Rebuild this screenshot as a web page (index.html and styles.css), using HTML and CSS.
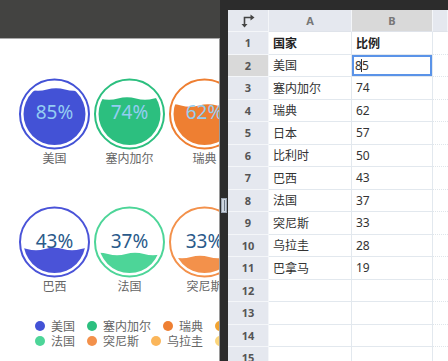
FILE: index.html
```html
<!DOCTYPE html>
<html>
<head>
<meta charset="utf-8">
<link rel="stylesheet" href="styles.css">
</head>
<body>
<div class="app">
  <div class="left">
    <div class="topbar"></div>
    <div class="canvas">
      <div class="charts row1">
        <div class="chart">
          <svg width="75" height="74" viewBox="0 0 75 74">
            <defs>
              <clipPath id="c1"><circle cx="37.5" cy="37" r="31"/></clipPath>
            </defs>
            <circle cx="37.5" cy="37" r="34.5" fill="none" stroke="#4352d6" stroke-width="2"/>
            <g clip-path="url(#c1)"><path fill="#4352d6" d="M-6,12.5 Q3,10 12,12.5 T30,12.5 T48,12.5 T66,12.5 T84,12.5 V80 H-6Z"/></g>
            <text x="37.5" y="42" class="pct in">85%</text>
          </svg>
          <div class="name">美国</div>
        </div>
        <div class="chart">
          <svg width="75" height="74" viewBox="0 0 75 74">
            <defs>
              <clipPath id="c2"><circle cx="37.5" cy="37" r="31"/></clipPath>
            </defs>
            <circle cx="37.5" cy="37" r="34.5" fill="none" stroke="#2cbf7f" stroke-width="2"/>
            <g clip-path="url(#c2)"><path fill="#2cbf7f" d="M-10,21.5 Q-1,19 8,21.5 T26,21.5 T44,21.5 T62,21.5 T80,21.5 V80 H-10Z"/></g>
            <text x="37.5" y="42" class="pct in">74%</text>
          </svg>
          <div class="name">塞内加尔</div>
        </div>
        <div class="chart">
          <svg width="75" height="74" viewBox="0 0 75 74">
            <defs>
              <clipPath id="c3"><circle cx="37.5" cy="37" r="31"/></clipPath>
            </defs>
            <circle cx="37.5" cy="37" r="34.5" fill="none" stroke="#ee7f32" stroke-width="2"/>
            <g clip-path="url(#c3)"><path fill="#ee7f32" d="M-4,28.5 Q5,26 14,28.5 T32,28.5 T50,28.5 T68,28.5 T86,28.5 V80 H-4Z"/></g>
            <text x="37.5" y="42" class="pct in">62%</text>
          </svg>
          <div class="name">瑞典</div>
        </div>
      </div>
      <div class="charts row2">
        <div class="chart">
          <svg width="75" height="74" viewBox="0 0 75 74">
            <defs>
              <clipPath id="c4"><circle cx="37.5" cy="37" r="31"/></clipPath>
              <clipPath id="w4"><path d="M-8,44 Q1,41.5 10,44 T28,44 T46,44 T64,44 T82,44 V80 H-8Z"/></clipPath>
            </defs>
            <circle cx="37.5" cy="37" r="34.5" fill="none" stroke="#4a53d8" stroke-width="2"/>
            <text x="37.5" y="43" class="pct out">43%</text>
            <g clip-path="url(#c4)"><path fill="#4a53d8" d="M-8,44 Q1,41.5 10,44 T28,44 T46,44 T64,44 T82,44 V80 H-8Z"/></g>
            <g clip-path="url(#w4)"><path fill="#3b48c4" d="M0,0 H0 V0Z"/></g>
          </svg>
          <div class="name">巴西</div>
        </div>
        <div class="chart">
          <svg width="75" height="74" viewBox="0 0 75 74">
            <defs>
              <clipPath id="c5"><circle cx="37.5" cy="37" r="31"/></clipPath>
            </defs>
            <circle cx="37.5" cy="37" r="34.5" fill="none" stroke="#4dd598" stroke-width="2"/>
            <text x="37.5" y="43" class="pct out">37%</text>
            <g clip-path="url(#c5)"><path fill="#4dd598" d="M-2,49 Q7,46.5 16,49 T34,49 T52,49 T70,49 T88,49 V80 H-2Z"/></g>
          </svg>
          <div class="name">法国</div>
        </div>
        <div class="chart">
          <svg width="75" height="74" viewBox="0 0 75 74">
            <defs>
              <clipPath id="c6"><circle cx="37.5" cy="37" r="31"/></clipPath>
            </defs>
            <circle cx="37.5" cy="37" r="34.5" fill="none" stroke="#f3914b" stroke-width="2"/>
            <text x="37.5" y="43" class="pct out">33%</text>
            <g clip-path="url(#c6)"><path fill="#f3914b" d="M-12,52 Q-3,49.5 6,52 T24,52 T42,52 T60,52 T78,52 V80 H-12Z"/></g>
          </svg>
          <div class="name">突尼斯</div>
        </div>
      </div>
      <div class="legend">
        <div class="lrow">
          <span class="item"><i class="dot" style="background:#4352d6"></i>美国</span>
          <span class="item"><i class="dot" style="background:#2cbf7f"></i>塞内加尔</span>
          <span class="item"><i class="dot" style="background:#ee7f32"></i>瑞典</span>
          <span class="item"><i class="dot" style="background:#f2a432"></i></span>
        </div>
        <div class="lrow">
          <span class="item"><i class="dot" style="background:#4dd598"></i>法国</span>
          <span class="item"><i class="dot" style="background:#f3914b"></i>突尼斯</span>
          <span class="item"><i class="dot" style="background:#fbb65a"></i>乌拉圭</span>
          <span class="item"><i class="dot" style="background:#fcd67c"></i></span>
        </div>
      </div>
    </div>
  </div>
  <div class="splitter"><div class="grip"></div></div>
  <div class="right">
    <div class="sheet">
      <div class="row head">
        <div class="cell corner">
          <svg width="14" height="14" viewBox="0 0 14 14">
            <path d="M3.5 11 V3.5 H10" fill="none" stroke="#444" stroke-width="1.6"/>
            <path d="M0.5 10 H6.5 L3.5 13.5Z" fill="#444"/>
            <path d="M9.5 0.5 V6.5 L13.5 3.5Z" fill="#444"/>
          </svg>
        </div>
        <div class="cell ch">A</div>
        <div class="cell ch sel">B</div>
        <div class="cell ch"></div>
      </div>
      <div class="row"><div class="cell rh">1</div><div class="cell b">国家</div><div class="cell b">比例</div><div class="cell c"></div></div>
      <div class="row"><div class="cell rh sel">2</div><div class="cell">美国</div><div class="cell active">8<span class="caret"></span>5</div><div class="cell c"></div></div>
      <div class="row"><div class="cell rh">3</div><div class="cell">塞内加尔</div><div class="cell">74</div><div class="cell c"></div></div>
      <div class="row"><div class="cell rh">4</div><div class="cell">瑞典</div><div class="cell">62</div><div class="cell c"></div></div>
      <div class="row"><div class="cell rh">5</div><div class="cell">日本</div><div class="cell">57</div><div class="cell c"></div></div>
      <div class="row"><div class="cell rh">6</div><div class="cell">比利时</div><div class="cell">50</div><div class="cell c"></div></div>
      <div class="row"><div class="cell rh">7</div><div class="cell">巴西</div><div class="cell">43</div><div class="cell c"></div></div>
      <div class="row"><div class="cell rh">8</div><div class="cell">法国</div><div class="cell">37</div><div class="cell c"></div></div>
      <div class="row"><div class="cell rh">9</div><div class="cell">突尼斯</div><div class="cell">33</div><div class="cell c"></div></div>
      <div class="row"><div class="cell rh">10</div><div class="cell">乌拉圭</div><div class="cell">28</div><div class="cell c"></div></div>
      <div class="row"><div class="cell rh">11</div><div class="cell">巴拿马</div><div class="cell">19</div><div class="cell c"></div></div>
      <div class="row"><div class="cell rh">12</div><div class="cell"></div><div class="cell"></div><div class="cell c"></div></div>
      <div class="row"><div class="cell rh">13</div><div class="cell"></div><div class="cell"></div><div class="cell c"></div></div>
      <div class="row"><div class="cell rh">14</div><div class="cell"></div><div class="cell"></div><div class="cell c"></div></div>
      <div class="row"><div class="cell rh">15</div><div class="cell"></div><div class="cell"></div><div class="cell c"></div></div>
    </div>
  </div>
</div>
</body>
</html>
```
FILE: styles.css
```css
* { box-sizing: border-box; }
html, body {
  margin: 0;
  padding: 0;
  width: 448px;
  height: 361px;
  overflow: hidden;
  background: #2c2c2c;
  font-family: "Noto Sans", "Noto Sans CJK SC", sans-serif;
}
.app {
  display: flex;
  width: 448px;
  height: 361px;
}
.left {
  width: 220px;
  flex: 0 0 220px;
  display: flex;
  flex-direction: column;
  overflow: hidden;
}
.topbar {
  height: 38px;
  flex: 0 0 38px;
  background: #434341;
}
.canvas {
  flex: 1;
  background: #fff;
  border-top: 1px solid #a9a9a9;
  border-right: 1px solid #9a9a9a;
  overflow: hidden;
}
.charts {
  display: flex;
  padding-left: 17px;
  width: 219px;
  overflow: hidden;
}
.row1 { margin-top: 38px; }
.row2 { margin-top: 40px; }
.chart {
  flex: 0 0 75px;
  width: 75px;
  display: flex;
  flex-direction: column;
  align-items: center;
}
.chart svg { display: block; }
.name {
  height: 14px;
  line-height: 14px;
  font-size: 12px;
  color: #666;
  font-family: "Noto Sans CJK SC", sans-serif;
  white-space: nowrap;
}
.pct {
  font-family: "Noto Sans", "Noto Sans CJK SC", sans-serif;
  font-size: 19px;
  text-anchor: middle;
}
.pct.in { fill: #94cdf2; }
.pct.out { fill: #2a5a8a; }
.legend {
  margin-top: 25px;
  padding-left: 35px;
  width: 219px;
  overflow: hidden;
  font-family: "Noto Sans CJK SC", sans-serif;
  font-size: 12px;
  color: #666;
}
.lrow {
  display: flex;
  gap: 12px;
  height: 15px;
  line-height: 15px;
  white-space: nowrap;
}
.item {
  display: flex;
  align-items: center;
}
.dot {
  width: 10px;
  height: 10px;
  border-radius: 50%;
  margin-right: 6px;
  flex: 0 0 10px;
}
.splitter {
  flex: 0 0 8px;
  width: 8px;
  background: #2c2c2c;
  display: flex;
  align-items: flex-start;
  justify-content: center;
}
.grip {
  margin-top: 198px;
  width: 6px;
  height: 15px;
  background: #cdd5df;
  border: 1px solid #9aa4b2;
  position: relative;
}
.grip::after {
  content: "";
  position: absolute;
  left: 1.5px;
  top: 1px;
  width: 1px;
  height: 11px;
  background: #6f7a88;
}
.right {
  flex: 1;
  padding-top: 10px;
  background: #2c2c2c;
  overflow: hidden;
}
.sheet {
  background: #fff;
  height: 100%;
  overflow: hidden;
  font-family: "Noto Sans", "Noto Sans CJK SC", sans-serif;
  font-size: 12px;
  color: #333;
}
.row {
  display: grid;
  grid-template-columns: 41px 83px 81px 1fr;
  height: 22.5px;
}
.row.head { height: 22px; }
.cell {
  border-right: 1px solid #e2e8ee;
  border-bottom: 1px solid #e2e8ee;
  padding-left: 4px;
  display: flex;
  align-items: center;
  white-space: nowrap;
  overflow: hidden;
}
.cell.c { border-right: none; border-bottom: 1px dotted #dfe5ea; }
.cell.b { font-weight: bold; color: #222; font-family: "Noto Sans CJK SC", sans-serif; }
.corner, .ch, .rh {
  background: #e5e8ef;
  justify-content: center;
  padding-left: 0;
  color: #666;
  border-right: 1px solid #f4f6f9;
  border-bottom: 1px solid #f4f6f9;
}
.ch { font-size: 11px; font-weight: bold; color: #777; border-bottom: 1px solid #dfe3ea; }
.rh { font-size: 11px; font-weight: bold; color: #555; }
.ch.sel, .rh.sel { background: #d9d9d9; }
.active {
  box-shadow: inset 0 0 0 2px #5a93e8;
  padding-left: 3px;
}
.caret {
  display: inline-block;
  width: 1px;
  height: 13px;
  background: #333;
  margin: 0 0 0 -1px;
}
```
